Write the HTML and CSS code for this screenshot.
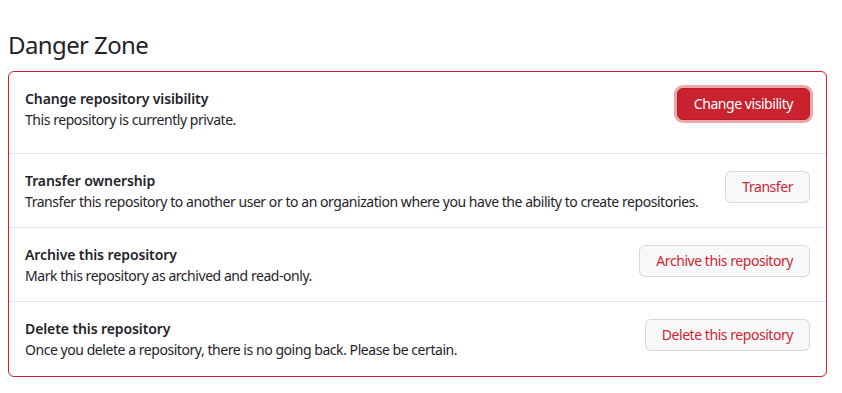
FILE: index.html
```html
<!DOCTYPE html>
<html lang="en">
<head>
    <meta charset="UTF-8">
    <meta name="viewport" content="width=device-width, initial-scale=1.0">
    <title>Danger Zone</title>
    <link rel="stylesheet" href="styles.css">
</head>
<body>
    <div class="settings">
        <h2 class="subhead">Danger Zone</h2>
        <div class="danger-box">
            <div class="row row-first">
                <div class="row-text">
                    <div class="row-title">Change repository visibility</div>
                    <div class="row-desc">This repository is currently private.</div>
                </div>
                <button class="btn btn-danger-primary">Change visibility</button>
            </div>
            <div class="row">
                <div class="row-text">
                    <div class="row-title">Transfer ownership</div>
                    <div class="row-desc">Transfer this repository to another user or to an organization where you have the ability to create repositories.</div>
                </div>
                <button class="btn btn-danger">Transfer</button>
            </div>
            <div class="row">
                <div class="row-text">
                    <div class="row-title">Archive this repository</div>
                    <div class="row-desc">Mark this repository as archived and read-only.</div>
                </div>
                <button class="btn btn-danger">Archive this repository</button>
            </div>
            <div class="row row-last">
                <div class="row-text">
                    <div class="row-title">Delete this repository</div>
                    <div class="row-desc">Once you delete a repository, there is no going back. Please be certain.</div>
                </div>
                <button class="btn btn-danger">Delete this repository</button>
            </div>
        </div>
    </div>
</body>
</html>
```

FILE: styles.css
```css
body {
    font-family: "Noto Sans", "Open Sans", sans-serif;
    font-size: 14px;
    line-height: 1.5;
    letter-spacing: -0.45px;
    color: #1f2328;
    background: #ffffff;
    margin: 0;
    padding: 0 8px;
}
.settings {
    width: 819px;
}
.subhead {
    font-size: 24px;
    font-weight: 400;
    line-height: 36px;
    letter-spacing: -0.6px;
    margin: 27px 0 8px;
}
.danger-box {
    border: 1px solid #cf222e;
    border-radius: 6px;
}
.row {
    display: flex;
    align-items: flex-start;
    justify-content: space-between;
    padding: 16px 16px 15px;
    border-top: 1px solid #e1e4e8;
}
.row:first-child {
    border-top: none;
}
.row-first {
    padding-bottom: 23px;
}
.row-last {
    padding-bottom: 16px;
}
.row .btn {
    margin-top: 1px;
}
.row-first .btn {
    margin-top: 0;
}
.row-title {
    font-weight: 600;
    letter-spacing: -0.1px;
}
.btn {
    font-family: inherit;
    font-size: 14px;
    line-height: 20px;
    letter-spacing: -0.45px;
    padding: 5px 16px;
    border-radius: 6px;
    border: 1px solid rgba(31, 35, 40, 0.15);
    background: #f6f8fa;
    white-space: nowrap;
    margin-left: 16px;
    cursor: pointer;
}
.btn-danger {
    color: #d1242f;
}
.btn-danger-primary {
    color: #ffffff;
    background: #c9232f;
    border-color: #b21d28;
    box-shadow: 0 0 0 3px rgba(207, 34, 46, 0.4);
}
```
